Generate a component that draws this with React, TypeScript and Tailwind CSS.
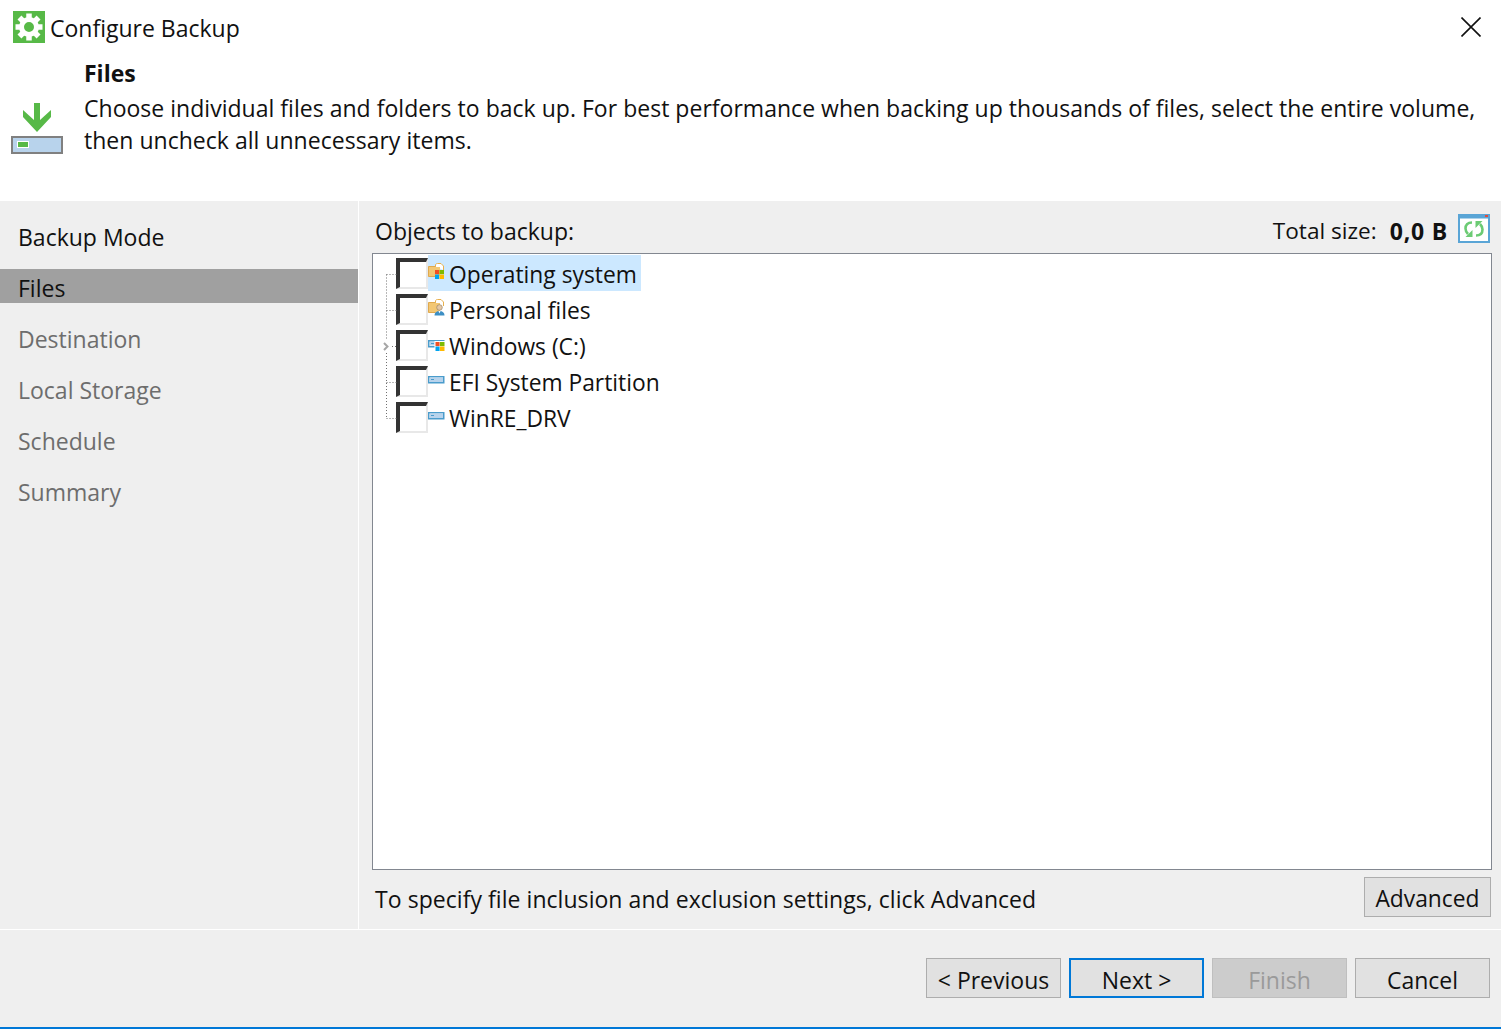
import React from "react";

const Win = ({ x, y, s = 9 }: { x: number; y: number; s?: number }) => (
  <g>
    <rect x={x} y={y} width={s / 2 - 0.4} height={s / 2 - 0.4} fill="#f25022" />
    <rect x={x + s / 2} y={y} width={s / 2} height={s / 2 - 0.4} fill="#7fba00" />
    <rect x={x} y={y + s / 2} width={s / 2 - 0.4} height={s / 2} fill="#00a4ef" />
    <rect x={x + s / 2} y={y + s / 2} width={s / 2} height={s / 2} fill="#ffb900" />
  </g>
);

const FolderBack = () => (
  <g>
    <path d="M7.5 3.5V2C7.5 1 8.5 0.5 9.5 0.5H13L15.5 3V7" fill="#fff" stroke="#e8b04e" strokeWidth="1" />
    <path d="M0.5 3.5H7.5V13.5H0.5Z" fill="#f3c773" stroke="#e0a94d" strokeWidth="1" />
    <rect x="4" y="4" width="8" height="9" fill="#f3c773" />
  </g>
);

const OsIcon = () => (
  <svg width="17" height="18" viewBox="0 0 17 18">
    <FolderBack />
    <Win x={7} y={7} />
  </svg>
);

const PersonIcon = () => (
  <svg width="17" height="18" viewBox="0 0 17 18">
    <FolderBack />
    <circle cx="11.5" cy="8.5" r="2.8" fill="#e5c7a4" stroke="#8a7a64" strokeWidth="0.6" />
    <path d="M6.5 16.5C6.5 13.5 8.5 12 11.5 12S16.5 13.5 16.5 16.5Z" fill="#3d8fc4" />
    <path d="M10.5 12H12.5L11.5 14.5Z" fill="#fff" />
  </svg>
);

const DriveWinIcon = () => (
  <svg width="17" height="18" viewBox="0 0 17 18">
    <rect x="0.75" y="5.75" width="15" height="6" fill="#fff" stroke="#4a9ccc" strokeWidth="1.5" />
    <rect x="2" y="7" width="12" height="3.5" fill="#b8d3ec" />
    <rect x="3" y="8" width="3" height="1" fill="#4a9ccc" />
    <rect x="6.5" y="6" width="10.5" height="12" fill="#fff" />
    <Win x={7.5} y={7} />
  </svg>
);

const DriveIcon = () => (
  <svg width="17" height="18" viewBox="0 0 17 18">
    <rect x="0.75" y="5.75" width="15" height="6" fill="#fff" stroke="#4a9ccc" strokeWidth="1.5" />
    <rect x="1.5" y="6.5" width="13.5" height="4.5" fill="#b8d3ec" />
    <rect x="3" y="8" width="3" height="1" fill="#4a9ccc" />
  </svg>
);

const Check = () => (
  <span className="block w-[32px] h-[31px] shrink-0 border-t-[4px] border-l-[4px] border-r-2 border-b-2 border-t-[#333333] border-l-[#333333] border-r-[#e8e8e8] border-b-[#e8e8e8] bg-white" />
);

const rows = [
  { label: "Operating system", icon: <OsIcon />, selected: true },
  { label: "Personal files", icon: <PersonIcon />, selected: false },
  { label: "Windows (C:)", icon: <DriveWinIcon />, selected: false },
  { label: "EFI System Partition", icon: <DriveIcon />, selected: false },
  { label: "WinRE_DRV", icon: <DriveIcon />, selected: false },
];

const TreeLines = () => (
  <svg className="absolute left-[9px] top-[1px] pointer-events-none" width="26" height="180" viewBox="0 0 26 180" fill="none">
    <path d="M4.5 19.5V84M4.5 98V163.5M4.5 19.5H15M4.5 55.5H15M10 91.5H15M4.5 127.5H15M4.5 163.5H15" stroke="#707070" strokeDasharray="1 2" />
    <path d="M2 88L5.5 91.5L2 95" stroke="#a6a6a6" strokeWidth="2" />
  </svg>
);

const steps = ["Destination", "Local Storage", "Schedule", "Summary"];

const btn = "w-[135px] h-[40px] pt-[4px] border border-[#adadad] bg-[#e1e1e1] flex items-center justify-center text-[#111111]";

export default function App() {
  return (
    <div
      className="w-[1501px] h-[1029px] bg-white flex flex-col overflow-hidden text-[23px] leading-[32px] text-[#111111]"
      style={{ fontFamily: '"Open Sans", "Noto Sans", sans-serif' }}
    >
      <header className="h-[201px] shrink-0 flex flex-col">
        <div className="flex items-center h-[32px] mt-[11px] pl-[13px] pr-[20px]">
          <svg width="32" height="32" viewBox="0 0 32 32" className="shrink-0">
            <rect width="32" height="32" fill="#57b947" />
            <g fill="#ffffff">
              {[0, 45, 90, 135, 180, 225, 270, 315].map((a) => (
                <rect key={a} x="13.25" y="2.5" width="5.5" height="6" transform={`rotate(${a} 16 16)`} />
              ))}
            </g>
            <circle cx="16" cy="16" r="7.5" fill="none" stroke="#ffffff" strokeWidth="5" />
          </svg>
          <span className="ml-[5px] flex-1 pt-[2px]">Configure Backup</span>
          <svg width="20" height="20" viewBox="0 0 20 20" className="shrink-0">
            <path d="M0.5 0.5L19.5 19.5M19.5 0.5L0.5 19.5" stroke="#111111" strokeWidth="1.6" />
          </svg>
        </div>
        <div className="flex mt-[14px]">
          <svg width="52" height="52" viewBox="0 0 52 52" className="shrink-0 ml-[11px] mt-[46px]">
            <path d="M23 0H29V17L40 7V14L26 29L12 14V7L23 17Z" fill="#57b947" />
            <rect x="1" y="34" width="50" height="16" fill="#b8d3ec" stroke="#808080" strokeWidth="2" />
            <rect x="6.5" y="38.5" width="11" height="6" fill="#57b947" stroke="#fff" />
          </svg>
          <div className="ml-[21px] w-[1400px]">
            <div className="font-bold h-[32px]">Files</div>
            <p className="mt-[3px] tracking-[0.022px]">
              Choose individual files and folders to back up. For best performance when backing up thousands of files, select the entire volume, then uncheck all unnecessary items.
            </p>
          </div>
        </div>
      </header>

      <main className="h-[729px] shrink-0 flex bg-[#efefef] border-b border-white">
        <nav className="w-[358px] shrink-0 pt-[17px] flex flex-col gap-[17px]">
          <div className="h-[34px] pl-[18px] pt-[3px] flex items-center">Backup Mode</div>
          <div className="h-[34px] pl-[18px] pt-[3px] flex items-center bg-[#a0a0a0]">Files</div>
          {steps.map((s) => (
            <div key={s} className="h-[34px] pl-[18px] pt-[3px] flex items-center text-[#6d6d6d]">{s}</div>
          ))}
        </nav>
        <section className="flex-1 border-l border-white pl-[13px] pr-[9px] flex flex-col">
          <div className="h-[52px] shrink-0 flex items-center justify-between pl-[3px] pt-[8px]">
            <span>Objects to backup:</span>
            <span className="flex items-center">
              <span className="text-[22.6px]">Total size:</span>
              <b className="ml-[13px] tracking-[0.8px]">0,0 B</b>
              <svg width="32" height="29" viewBox="0 0 32 29" className="ml-[10px] mr-[2px] mb-[6px]">
                <rect x="1" y="1" width="30" height="27" fill="#fff" stroke="#5aa5d6" strokeWidth="2" />
                <rect x="1" y="1" width="30" height="3.5" fill="#5aa5d6" />
                <rect x="27" y="1" width="3" height="2" fill="#e04c3c" />
                <path d="M14 8.5C9.5 8.5 7.5 11 7.5 14.5C7.5 16.5 8.5 18.5 10 20" fill="none" stroke="#6ccb74" strokeWidth="2.6" />
                <path d="M14.5 16V23H7.5Z" fill="#6ccb74" />
                <path d="M18 21.5C22.5 21.5 24.5 19 24.5 15.5C24.5 13.5 23.5 11.5 22 10" fill="none" stroke="#6ccb74" strokeWidth="2.6" />
                <path d="M17.5 14V7H24.5Z" fill="#6ccb74" />
              </svg>
            </span>
          </div>
          <div className="relative h-[617px] shrink-0 bg-white border border-[#828790] pl-[23px] pt-[1px]">
            <TreeLines />
            {rows.map((r) => (
              <div key={r.label} className="h-[36px] flex items-center">
                <Check />
                <div className={`flex items-center h-[36px] pr-[4px] ${r.selected ? "bg-[#cce8ff]" : ""}`}>
                  <span className="w-[18px] flex items-center mb-[3px]">{r.icon}</span>
                  <span className="ml-[3px] text-[22.8px] pt-[4px]">{r.label}</span>
                </div>
              </div>
            ))}
          </div>
          <div className="h-[59px] shrink-0 flex items-start justify-between pl-[3px] mr-[1px] pt-[7px]">
            <span className="pt-[6px] tracking-[0.05px]">To specify file inclusion and exclusion settings, click Advanced</span>
            <button className="w-[127px] h-[40px] pt-[4px] border border-[#adadad] bg-[#e1e1e1] text-[#111111] text-[22.8px]">Advanced</button>
          </div>
        </section>
      </main>

      <footer className="flex-1 bg-[#efefef] border-b-2 border-[#0078d7] flex justify-end items-start gap-[8px] pt-[28px] pr-[11px]">
        <button className={btn}>&lt; Previous</button>
        <button className="w-[135px] h-[40px] pt-[4px] border-2 border-[#0078d7] bg-[#e1e1e1] flex items-center justify-center text-[#111111]">Next &gt;</button>
        <button className="w-[135px] h-[40px] pt-[4px] border border-[#bfbfbf] bg-[#cccccc] flex items-center justify-center text-[#9a9a9a]">Finish</button>
        <button className={btn}>Cancel</button>
      </footer>
    </div>
  );
}
